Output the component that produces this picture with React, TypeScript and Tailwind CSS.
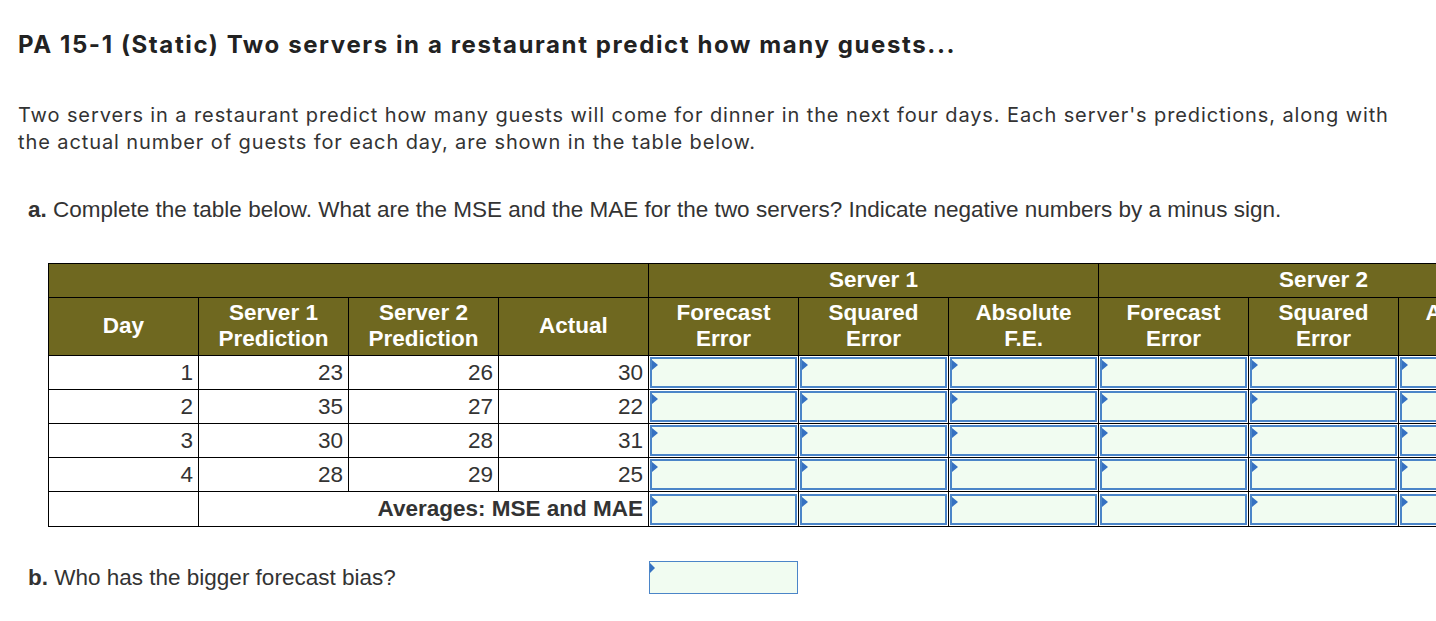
import React from "react";

const rows = [
  { day: 1, s1: 23, s2: 26, actual: 30 },
  { day: 2, s1: 35, s2: 27, actual: 22 },
  { day: 3, s1: 30, s2: 28, actual: 31 },
  { day: 4, s1: 28, s2: 29, actual: 25 },
];

const subHeads = [
  ["Day"],
  ["Server 1", "Prediction"],
  ["Server 2", "Prediction"],
  ["Actual"],
  ["Forecast", "Error"],
  ["Squared", "Error"],
  ["Absolute", "F.E."],
  ["Forecast", "Error"],
  ["Squared", "Error"],
  ["Absolute", "F.E."],
];

function AnswerBox({ className = "" }: { className?: string }) {
  return (
    <div className={`relative border-2 border-[#4b85c8] bg-[#f1fcf1] ${className}`}>
      <span className="absolute left-0 top-[1px] h-0 w-0 border-y-[5px] border-l-[6px] border-y-transparent border-l-[#3672c2]" />
    </div>
  );
}

function InputCell() {
  return (
    <td className="border border-black p-[1px]">
      <AnswerBox className="h-[31px] w-full" />
    </td>
  );
}

export default function App() {
  return (
    <div className="h-[621px] w-[1436px] overflow-hidden bg-white text-[#333]">
      <h1 className="pl-[18px] pt-[29px] font-['Inter',sans-serif] text-[24px] font-bold leading-[32px] tracking-[1.6px] text-[#222]">
        PA 15-1 (Static) Two servers in a restaurant predict how many guests...
      </h1>

      <p className="mt-[41px] w-[1418px] pl-[18px] font-['Inter',sans-serif] text-[20px] leading-[27px] tracking-[0.9px] text-[#333]">
        Two servers in a restaurant predict how many guests will come for dinner in the next four days.
        Each server's predictions, along with the actual number of guests for each day, are shown in the
        table below.
      </p>

      <p className="mt-[41px] pl-[28px] font-['Liberation_Sans',Arial,sans-serif] text-[22.5px] leading-[26px] text-[#333]">
        <b>a.</b> Complete the table below. What are the MSE and the MAE for the two servers? Indicate
        negative numbers by a minus sign.
      </p>

      <div className="mt-[40px] pl-[48px]">
        <table className="w-[1500px] table-fixed border-collapse font-['Liberation_Sans',Arial,sans-serif] text-[22.5px]">
          <colgroup>
            {subHeads.map((_, i) => (
              <col key={i} className="w-[150px]" />
            ))}
          </colgroup>
          <thead className="bg-[#6f6820] font-bold text-white">
            <tr className="h-[34px]">
              <th colSpan={4} className="border border-black" />
              <th colSpan={3} className="border border-black pb-[2px] text-center leading-[26px]">
                Server 1
              </th>
              <th colSpan={3} className="border border-black pb-[2px] text-center leading-[26px]">
                Server 2
              </th>
            </tr>
            <tr className="h-[58px]">
              {subHeads.map((h, i) => (
                <th key={i} className="border border-black pb-[2px] text-center leading-[26px]">
                  {h.map((line, j) => (
                    <div key={j}>{line}</div>
                  ))}
                </th>
              ))}
            </tr>
          </thead>
          <tbody>
            {rows.map((r) => (
              <tr key={r.day} className="h-[34px]">
                {[r.day, r.s1, r.s2, r.actual].map((v, i) => (
                  <td key={i} className="border border-black pr-[5px] text-right leading-[26px]">
                    {v}
                  </td>
                ))}
                {Array.from({ length: 6 }).map((_, i) => (
                  <InputCell key={i} />
                ))}
              </tr>
            ))}
            <tr className="h-[35px]">
              <td className="border border-black" />
              <td colSpan={3} className="border border-black pr-[5px] text-right font-bold leading-[26px]">
                Averages: MSE and MAE
              </td>
              {Array.from({ length: 6 }).map((_, i) => (
                <InputCell key={i} />
              ))}
            </tr>
          </tbody>
        </table>
      </div>

      <div className="mt-[34px] flex items-center font-['Liberation_Sans',Arial,sans-serif] text-[22.5px] leading-[26px] text-[#333]">
        <p className="w-[649px] pl-[28px]">
          <b>b.</b> Who has the bigger forecast bias?
        </p>
        <div className="relative h-[33px] w-[149px] border border-[#4b85c8] bg-[#f1fcf1]">
          <span className="absolute left-0 top-[1px] h-0 w-0 border-y-[5px] border-l-[5px] border-y-transparent border-l-[#3672c2]" />
        </div>
      </div>
    </div>
  );
}
